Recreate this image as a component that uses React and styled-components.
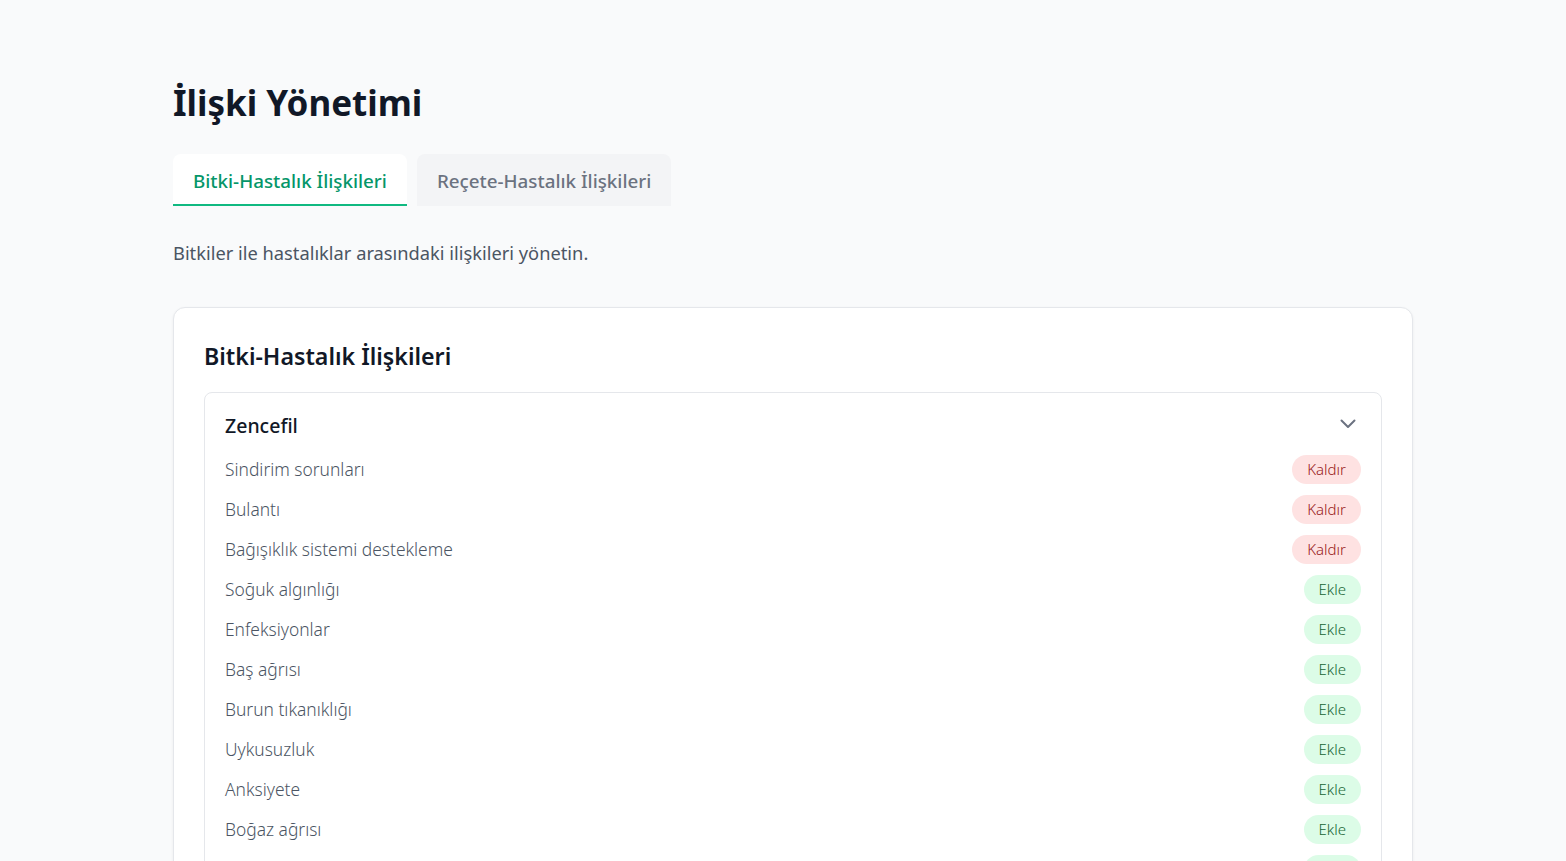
import React, { useState } from 'react';
import styled, { createGlobalStyle } from 'styled-components';

const GlobalStyle = createGlobalStyle`
  body {
    margin: 0;
    background: #f9fafb;
    font-family: "Noto Sans", "Open Sans", sans-serif;
    color: #111827;
  }
`;

const Page = styled.div`
  padding: 81px 0 0 173px;
  width: 1240px;
`;

const Heading = styled.h1`
  font-size: 35px;
  line-height: 44px;
  font-weight: 700;
  margin: 0;
  color: #111827;
`;

const Tabs = styled.div`
  display: flex;
  gap: 10px;
  margin-top: 29px;
`;

const Tab = styled.button`
  height: 52px;
  padding: 4px 20px 0;
  border: none;
  border-bottom: 2px solid ${(p) => (p.$active ? '#10b981' : 'transparent')};
  border-radius: 8px 8px 0 0;
  background: ${(p) => (p.$active ? '#ffffff' : '#f3f4f6')};
  color: ${(p) => (p.$active ? '#059669' : '#6b7280')};
  font-family: inherit;
  font-size: 18.8px;
  font-weight: 500;
  cursor: pointer;
`;

const Description = styled.p`
  margin: 33px 0 0;
  font-size: 18.3px;
  line-height: 28px;
  color: #4b5563;
`;

const Card = styled.div`
  margin-top: 40px;
  background: #fff;
  border: 1px solid #e5e7eb;
  border-radius: 12px;
  box-shadow: 0 1px 3px rgba(0, 0, 0, 0.06);
  padding: 32px 30px 30px;
`;

const CardTitle = styled.h2`
  margin: 0 0 20px;
  font-size: 23.2px;
  line-height: 32px;
  font-weight: 600;
  color: #111827;
`;

const Group = styled.div`
  border: 1px solid #e5e7eb;
  border-radius: 8px;
  padding: 16px 20px 20px;
`;

const GroupHeader = styled.div`
  display: flex;
  align-items: center;
  justify-content: space-between;
  height: 32px;
  cursor: pointer;
`;

const GroupName = styled.span`
  font-size: 19.5px;
  font-weight: 500;
  color: #111827;
`;

const Chevron = styled.svg`
  width: 16px;
  height: 10px;
  margin: 0 5px 3px 0;
  color: #6b7280;
`;

const List = styled.div`
  display: flex;
  flex-direction: column;
  gap: 10px;
  margin-top: 13px;
`;

const Row = styled.div`
  display: flex;
  align-items: center;
  justify-content: space-between;
  height: 30px;
`;

const Disease = styled.span`
  font-size: 17.4px;
  font-weight: 300;
  color: #4b5563;
`;

const Pill = styled.button`
  height: 29px;
  padding: 0 15px;
  border: none;
  border-radius: 999px;
  font-family: inherit;
  font-size: 15px;
  font-weight: 300;
  background: ${(p) => (p.$linked ? '#fee2e2' : '#dcfce7')};
  color: ${(p) => (p.$linked ? '#991b1b' : '#166534')};
  cursor: pointer;
`;

const diseases = [
  { name: 'Sindirim sorunları', linked: true },
  { name: 'Bulantı', linked: true },
  { name: 'Bağışıklık sistemi destekleme', linked: true },
  { name: 'Soğuk algınlığı', linked: false },
  { name: 'Enfeksiyonlar', linked: false },
  { name: 'Baş ağrısı', linked: false },
  { name: 'Burun tıkanıklığı', linked: false },
  { name: 'Uykusuzluk', linked: false },
  { name: 'Anksiyete', linked: false },
  { name: 'Boğaz ağrısı', linked: false },
  { name: 'Kas ağrısı', linked: false },
  { name: 'Yorgunluk', linked: false },
];

export default function App() {
  const [tab, setTab] = useState('bitki');
  const [items, setItems] = useState(diseases);

  const toggle = (name) => {
    setItems(items.map((d) => (d.name === name ? { ...d, linked: !d.linked } : d)));
  };

  return (
    <>
      <GlobalStyle />
      <Page>
        <Heading>İlişki Yönetimi</Heading>
        <Tabs>
          <Tab $active={tab === 'bitki'} onClick={() => setTab('bitki')}>
            Bitki-Hastalık İlişkileri
          </Tab>
          <Tab $active={tab === 'recete'} onClick={() => setTab('recete')}>
            Reçete-Hastalık İlişkileri
          </Tab>
        </Tabs>
        <Description>Bitkiler ile hastalıklar arasındaki ilişkileri yönetin.</Description>
        <Card>
          <CardTitle>Bitki-Hastalık İlişkileri</CardTitle>
          <Group>
            <GroupHeader>
              <GroupName>Zencefil</GroupName>
              <Chevron viewBox="0 0 16 10" fill="none">
                <polyline points="1.5,1.5 8,8 14.5,1.5" stroke="currentColor" strokeWidth="2" strokeLinecap="round" strokeLinejoin="round" />
              </Chevron>
            </GroupHeader>
            <List>
              {items.map((d) => (
                <Row key={d.name}>
                  <Disease>{d.name}</Disease>
                  <Pill $linked={d.linked} onClick={() => toggle(d.name)}>
                    {d.linked ? 'Kaldır' : 'Ekle'}
                  </Pill>
                </Row>
              ))}
            </List>
          </Group>
        </Card>
      </Page>
    </>
  );
}
